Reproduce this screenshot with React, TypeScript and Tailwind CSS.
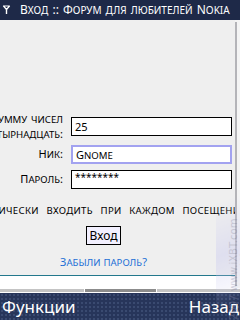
import React from "react";

function SC({ text, small }: { text: string; small: string }) {
  const segs: { s: string; low: boolean }[] = [];
  for (const ch of Array.from(text)) {
    const up = ch.toUpperCase();
    const low = ch !== up;
    const last = segs[segs.length - 1];
    if (last && last.low === low) last.s += low ? up : ch;
    else segs.push({ s: low ? up : ch, low });
  }
  return (
    <>
      {segs.map((g, i) =>
        g.low ? (
          <span key={i} className={small}>
            {g.s}
          </span>
        ) : (
          <span key={i}>{g.s}</span>
        )
      )}
    </>
  );
}

export default function App() {
  const sm = "text-[9.6px]";
  return (
    <div className="relative w-[240px] h-[320px] flex flex-col overflow-hidden font-['Noto_Sans',sans-serif] bg-white">
      {/* Title bar */}
      <div className="h-[20px] bg-[#1e2948] flex items-center text-white shrink-0">
        <svg width="20" height="20" viewBox="0 0 20 20" className="shrink-0">
          <path d="M3.5 6 H9.5 L6.5 9.5 Z" fill="none" stroke="white" strokeWidth="1.2" strokeLinejoin="round" />
          <path d="M6.5 9.5 V14" stroke="white" strokeWidth="1.4" />
        </svg>
        <span className="text-[12px] leading-none whitespace-nowrap [word-spacing:1px]">
          <SC text="Вход :: Форум для любителей Nokia" small="text-[10px]" />
        </span>
      </div>

      {/* Middle */}
      <div className="flex h-[268px] shrink-0">
        <div className="w-[235px] flex flex-col">
          <div className="h-[255px] bg-[#efefef] overflow-hidden pt-[92px] text-[11px] text-black">
            {/* Row 1 */}
            <div className="flex items-start h-[28px]">
              <div className="w-[63px] flex flex-col items-end shrink-0">
                <span className="whitespace-nowrap leading-[14px] [word-spacing:1px]">
                  <SC text="Введите сумму чисел" small={sm} />
                </span>
                <span className="whitespace-nowrap leading-[14px] [word-spacing:1px]">
                  <SC text="одиннадцать и четырнадцать:" small={sm} />
                </span>
              </div>
              <div className="ml-[8px] mt-[5px] w-[161px] h-[19px] bg-white border border-black flex items-center pl-[3px] shrink-0">
                <span className="leading-none">25</span>
              </div>
            </div>
            {/* Row 2 */}
            <div className="flex items-center h-[19px] mt-[5px]">
              <div className="w-[63px] flex justify-end shrink-0">
                <span className="whitespace-nowrap">
                  <SC text="Ник:" small={sm} />
                </span>
              </div>
              <div className="ml-[8px] w-[161px] h-[19px] bg-white border-2 border-[#a2a2f0] flex items-center pl-[3px] shrink-0">
                <span className="leading-none">
                  <SC text="Gnome" small={sm} />
                </span>
              </div>
            </div>
            {/* Row 3 */}
            <div className="flex items-center h-[19px] mt-[6px]">
              <div className="w-[63px] flex justify-end shrink-0">
                <span className="whitespace-nowrap">
                  <SC text="Пароль:" small={sm} />
                </span>
              </div>
              <div className="ml-[8px] w-[161px] h-[19px] bg-white border border-black flex items-start pl-[3px] shrink-0">
                <span className="leading-none text-[10px] pt-[1px]">********</span>
              </div>
            </div>
            {/* Auto login */}
            <div className="w-[200px] flex justify-center mt-[14px]">
              <span className="whitespace-nowrap leading-[14px] tracking-[0.3px] [word-spacing:4.5px]">
                <SC text="автоматически входить при каждом посещении" small={sm} />
              </span>
            </div>
            {/* Button */}
            <div className="w-[207px] flex justify-center mt-[8px]">
              <div className="h-[19px] px-[3px] bg-[#f2f0ff] border border-black flex items-center text-[12px] leading-none">
                Вход
              </div>
            </div>
            {/* Link */}
            <div className="w-[207px] flex justify-center mt-[10px]">
              <span className="whitespace-nowrap leading-[14px] text-[#1d6fd6]">
                <SC text="Забыли пароль?" small={sm} />
              </span>
            </div>
          </div>
          <div className="h-px bg-[#23788c]" />
          <div className="h-[12px] bg-white" />
        </div>
        <div className="w-[5px] bg-[#f4f4f4] flex">
          <div className="w-[2px] bg-[#b4b4b8] mt-[2px] mb-[2px]" />
        </div>
      </div>

      {/* Horizontal scrollbar */}
      <div className="h-[5px] bg-white flex items-center gap-[1px] shrink-0">
        <div className="w-[84px] h-[3px] bg-[#c4c4c4]" />
        <div className="w-[71px] h-[3px] bg-[#8c8c8c]" />
        <div className="flex-1 h-[3px] bg-[#c4c4c4]" />
      </div>

      {/* Softkeys */}
      <div className="h-[27px] shrink-0 bg-[#27355a] bg-[radial-gradient(circle,#3a4a70_0.8px,transparent_1px)] bg-[length:4px_4px] flex items-center justify-between text-white text-[17px] leading-none">
        <span className="pl-[2px]">Функции</span>
        <span className="pr-[1px]">Назад</span>
      </div>

      {/* Watermark */}
      <div className="absolute left-[216px] top-[150px] w-[24px] h-[170px] pointer-events-none opacity-40">
        <div className="absolute left-0 top-0 w-[24px] h-[170px] bg-[linear-gradient(160deg,transparent_30%,#c8c8f0_60%,transparent_90%)]" />
        <div className="absolute left-[12px] top-[170px] origin-top-left -rotate-90 whitespace-nowrap text-[10px] leading-[11px] text-[#8888aa] font-['DejaVu_Sans',sans-serif]">
          <div>2007 www.iXBT.com</div>
          <div>www.Digit-Life.com</div>
        </div>
      </div>
    </div>
  );
}
